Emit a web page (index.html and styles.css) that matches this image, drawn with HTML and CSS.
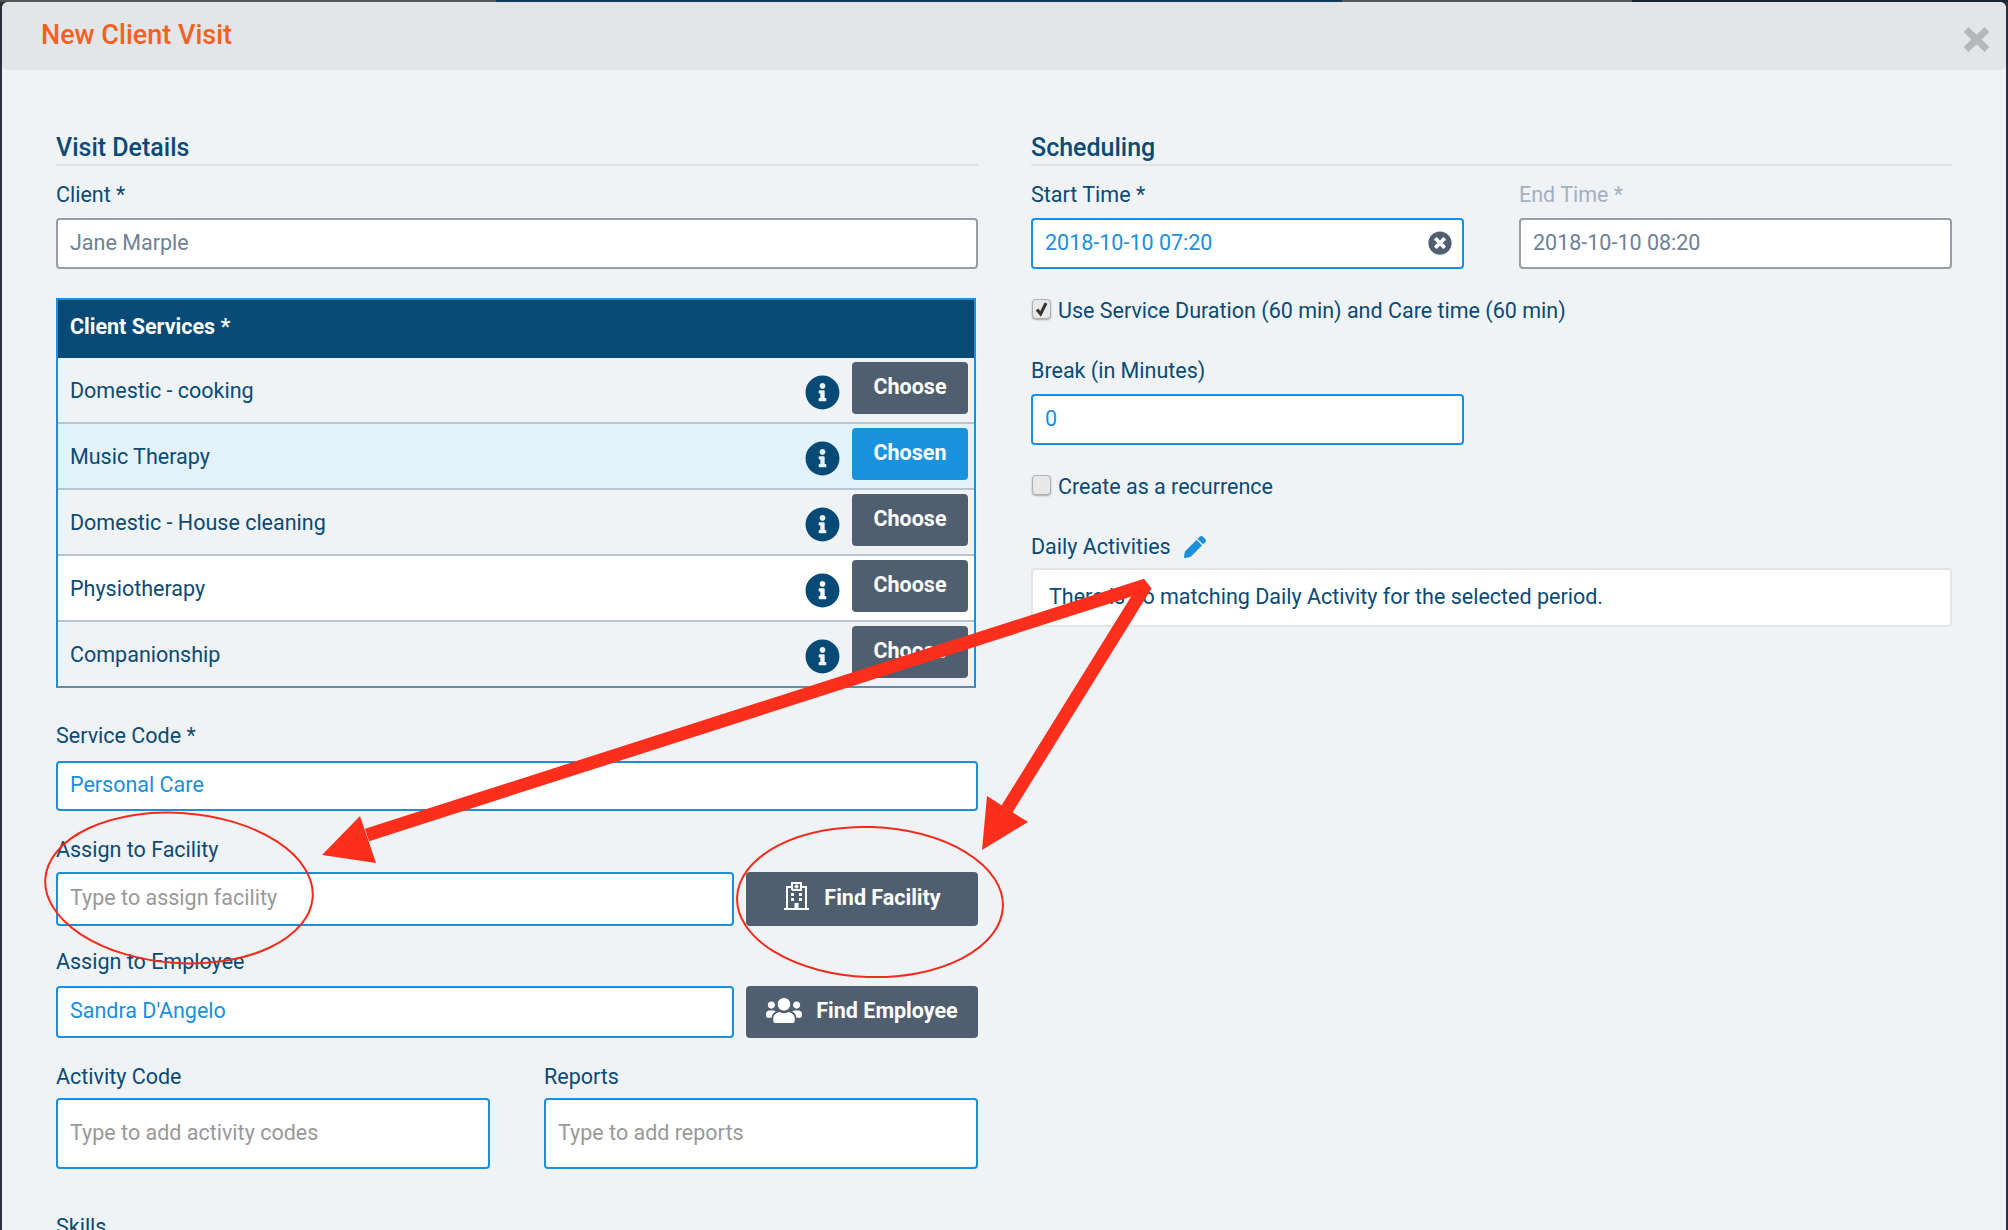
FILE: index.html
```html
<!DOCTYPE html>
<html lang="en">
<head>
<meta charset="utf-8">
<title>New Client Visit</title>
<link rel="stylesheet" href="styles.css">
</head>
<body>
<div class="backdrop-strip">
  <span class="strip-a"></span><span class="strip-b"></span><span class="strip-a"></span><span class="strip-c"></span>
</div>
<main class="modal">
  <header class="modal-header">
    <h1 class="modal-title">New Client Visit</h1>
    <svg class="close-icon" viewBox="0 0 27 27" aria-hidden="true"><path d="M3 3.5 24 23.5M24 3.5 3 23.5"/></svg>
  </header>
  <div class="modal-body">
    <section class="col">
      <h2 class="section-title">Visit Details</h2>
      <div class="label first">Client *</div>
      <div class="input h51 muted">Jane Marple</div>

      <div class="services">
        <div class="services-head">Client Services *</div>
        <div class="service-row">
          <span class="service-name">Domestic - cooking</span>
          <svg class="info" viewBox="0 0 512 512" aria-hidden="true"><use href="#i-info"/></svg>
          <span class="btn-choose">Choose</span>
        </div>
        <div class="service-row chosen">
          <span class="service-name">Music Therapy</span>
          <svg class="info" viewBox="0 0 512 512" aria-hidden="true"><use href="#i-info"/></svg>
          <span class="btn-choose on">Chosen</span>
        </div>
        <div class="service-row">
          <span class="service-name">Domestic - House cleaning</span>
          <svg class="info" viewBox="0 0 512 512" aria-hidden="true"><use href="#i-info"/></svg>
          <span class="btn-choose">Choose</span>
        </div>
        <div class="service-row white">
          <span class="service-name">Physiotherapy</span>
          <svg class="info" viewBox="0 0 512 512" aria-hidden="true"><use href="#i-info"/></svg>
          <span class="btn-choose">Choose</span>
        </div>
        <div class="service-row last">
          <span class="service-name">Companionship</span>
          <svg class="info" viewBox="0 0 512 512" aria-hidden="true"><use href="#i-info"/></svg>
          <span class="btn-choose">Choose</span>
        </div>
      </div>

      <div class="label service-label">Service Code *</div>
      <div class="input active h50">Personal Care</div>

      <div class="label facility-label">Assign to Facility</div>
      <div class="assign-row">
        <div class="input focus h54 grow placeholder">Type to assign facility</div>
        <span class="btn-find">
          <svg class="hospital" viewBox="0 0 27 28" aria-hidden="true">
            <path class="hosp-line" d="M1 27H26M4 27V5H9M18 5H23V27M9 8V1H18V8H9"/>
            <path class="hosp-line" d="M13.5 2.5V6.5M11.5 4.500H15.500"/>
            <path class="hosp-dots" d="M8 11h3v3H8zM16 11h3v3h-3zM8 16h3v3H8zM16 16h3v3h-3zM11.500 21h4v6h-4z"/>
          </svg>
          <span>Find Facility</span>
        </span>
      </div>

      <div class="label employee-label">Assign to Employee</div>
      <div class="assign-row">
        <div class="input active h52 grow">Sandra D'Angelo</div>
        <span class="btn-find">
          <svg class="users" viewBox="0 0 640 512" aria-hidden="true"><path d="M96 224c35.300 0 64-28.700 64-64s-28.700-64-64-64-64 28.700-64 64 28.700 64 64 64zm448 0c35.300 0 64-28.700 64-64s-28.700-64-64-64-64 28.700-64 64 28.700 64 64 64zm32 32h-64c-17.600 0-33.500 7.100-45.100 18.600 40.300 22.100 68.900 62 75.100 109.400h66c17.700 0 32-14.300 32-32v-32c0-35.300-28.700-64-64-64zm-256 0c61.900 0 112-50.100 112-112S381.900 32 320 32 208 82.100 208 144s50.100 112 112 112zm76.800 32h-8.300c-20.800 10-43.900 16-68.500 16s-47.600-6-68.500-16h-8.300C179.600 288 128 339.600 128 403.200V432c0 26.500 21.500 48 48 48h288c26.500 0 48-21.500 48-48v-28.800c0-63.600-51.600-115.200-115.200-115.200zm-223.700-13.400C161.500 263.100 145.600 256 128 256H64c-35.300 0-64 28.700-64 64v32c0 17.700 14.300 32 32 32h65.900c6.300-47.400 34.900-87.300 75.200-109.400z"/></svg>
          <span>Find Employee</span>
        </span>
      </div>

      <div class="code-row">
        <div>
          <div class="label tight">Activity Code</div>
          <div class="input active h71 placeholder">Type to add activity codes</div>
        </div>
        <div>
          <div class="label tight">Reports</div>
          <div class="input active h71 placeholder">Type to add reports</div>
        </div>
      </div>

      <div class="label skills-label">Skills</div>
    </section>

    <section class="col">
      <h2 class="section-title">Scheduling</h2>
      <div class="time-row">
        <div>
          <div class="label first">Start Time *</div>
          <div class="input active h51 with-clear">
            <span>2018-10-10 07:20</span>
            <svg class="clear" viewBox="0 0 512 512" aria-hidden="true"><path d="M256 8C119 8 8 119 8 256s111 248 248 248 248-111 248-248S393 8 256 8zm121.600 313.100c4.700 4.700 4.700 12.300 0 17L338 377.600c-4.700 4.700-12.300 4.700-17 0L256 312l-65.100 65.600c-4.700 4.700-12.300 4.700-17 0L134.400 338c-4.700-4.700-4.700-12.300 0-17l65.600-65-65.600-65.100c-4.700-4.700-4.700-12.300 0-17l39.600-39.600c4.700-4.700 12.300-4.700 17 0l65 65.700 65.100-65.600c4.700-4.700 12.300-4.700 17 0l39.600 39.600c4.700 4.700 4.700 12.300 0 17L312 256l65.600 65.100z"/></svg>
          </div>
        </div>
        <div>
          <div class="label first disabled">End Time *</div>
          <div class="input h51 muted">2018-10-10 08:20</div>
        </div>
      </div>

      <div class="check-row duration">
        <span class="check"><svg viewBox="0 0 18 20" aria-hidden="true"><path d="M4 10.500 8 15.500 14 3.500"/></svg></span>
        <span>Use Service Duration (60 min) and Care time (60 min)</span>
      </div>

      <div class="label break-label">Break (in Minutes)</div>
      <div class="input active h51 half">0</div>

      <div class="check-row recurrence">
        <span class="check"></span>
        <span>Create as a recurrence</span>
      </div>

      <div class="label daily-label">
        <span>Daily Activities</span>
        <svg class="pencil" viewBox="0 0 512 512" aria-hidden="true"><path d="M497.900 142.100l-46.100 46.100c-4.700 4.700-12.300 4.700-17 0l-111-111c-4.700-4.700-4.700-12.300 0-17l46.100-46.100c18.700-18.700 49.100-18.700 67.900 0l60.100 60.100c18.800 18.700 18.800 49.100 0 67.900zM284.200 99.800L21.600 362.400.4 483.900c-2.900 16.400 11.400 30.600 27.800 27.800l121.500-21.300 262.600-262.600c4.700-4.700 4.700-12.300 0-17l-111-111c-4.800-4.700-12.400-4.700-17.100 0z"/></svg>
      </div>
      <div class="notice">There is no matching Daily Activity for the selected period.</div>
    </section>
  </div>
</main>

<svg class="sprite" aria-hidden="true"><symbol id="i-info" viewBox="0 0 512 512"><path d="M256 8C119.043 8 8 119.083 8 256c0 136.997 111.043 248 248 248s248-111.003 248-248C504 119.083 392.957 8 256 8zm0 110c23.196 0 42 18.804 42 42s-18.804 42-42 42-42-18.804-42-42 18.804-42 42-42zm56 254c0 6.627-5.373 12-12 12h-88c-6.627 0-12-5.373-12-12v-24c0-6.627 5.373-12 12-12h12v-64h-12c-6.627 0-12-5.373-12-12v-24c0-6.627 5.373-12 12-12h64c6.627 0 12 5.373 12 12v100h12c6.627 0 12 5.373 12 12v24z"/></symbol></svg>

<svg class="annotations" viewBox="0 0 2008 1230" aria-hidden="true">
  <ellipse class="ring" cx="179" cy="888" rx="134" ry="75" transform="rotate(4 179 888)"/>
  <ellipse class="ring" cx="870" cy="902" rx="133" ry="75" transform="rotate(2 870 902)"/>
  <polyline class="shaft" points="367,835 1146,585 1007,809"/>
  <polygon class="head" points="322,855 360,816 376,863"/>
  <polygon class="head" points="982,850 987,796 1028,822"/>
</svg>
</body>
</html>
```
FILE: styles.css
```css
* { box-sizing: border-box; }
html, body { margin: 0; height: 1230px; overflow: hidden; }
body {
  position: relative;
  background: #2b3138;
  font-family: Roboto, "Liberation Sans", sans-serif;
  font-size: 21.5px;
  color: #0a4a75;
  display: flex;
  flex-direction: column;
}
.backdrop-strip { display: flex; height: 2px; flex: none; }
.strip-a { width: 496px; background: #555; }
.strip-b { width: 846px; background: #0f3a5a; }
.strip-a:nth-child(3) { width: 290px; }
.strip-c { flex: 1; background: #1a2330; }

.modal {
  margin: 0 2px;
  flex: 1;
  background: #eff3f6;
  border-radius: 6px 6px 0 0;
  overflow: hidden;
}
.modal-header {
  height: 68px;
  background: #e3e6e9;
  display: flex;
  align-items: center;
  justify-content: space-between;
  padding: 0 16px 3px 39px;
  border-radius: 6px;
}
.modal-title { margin: 0; font-size: 27px; font-weight: 500; color: #f4611f; }
.close-icon { width: 27px; height: 27px; margin-top: 9px; }
.close-icon path { fill: none; stroke: #b4b8ba; stroke-width: 7; }

.modal-body {
  display: grid;
  grid-template-columns: 922px 921px;
  column-gap: 53px;
  padding: 60px 0 0 54px;
}
.section-title {
  margin: 0;
  height: 36px;
  font-size: 25px;
  line-height: 36px;
  font-weight: 500;
  color: #0a4a75;
  border-bottom: 2px solid #dfe1e3;
}
.label { line-height: 28px; margin-bottom: 10px; }
.label.first { margin-top: 15px; margin-bottom: 9px; }
.label.disabled { color: #a3b0bf; }
.label.tight { margin-bottom: 7px; }
.service-label { margin-top: 34px; margin-bottom: 11px; }
.facility-label { margin-top: 25px; margin-bottom: 8px; }
.employee-label { margin-top: 22px; }
.skills-label { margin-top: 44px; }
.break-label { margin-top: 32px; margin-bottom: 9px; }
.daily-label {
  margin-top: 32px;
  margin-bottom: 7px;
  display: flex;
  align-items: center;
  gap: 13px;
}

.input {
  display: flex;
  align-items: center;
  background: #fff;
  border: 2px solid #999ca3;
  border-radius: 4px;
  padding: 0 12px 2px;
  color: #0a4a75;
}
.input.muted { color: #6f8196; }
.input.active { border-color: #1a8fdc; color: #1a8fdc; }
.input.focus { border-color: #1a8fdc; }
.input.placeholder { color: #999; }
.h50 { height: 50px; padding-bottom: 4px; }
.h51 { height: 51px; }
.h52 { height: 52px; padding-bottom: 4px; }
.h54 { height: 54px; padding-bottom: 4px; }
.h71 { height: 71px; }
.half { width: 433px; }
.grow { flex: 1; }
.with-clear { justify-content: space-between; padding-right: 10px; }
.clear { width: 24px; height: 24px; fill: #505f6f; }

.services {
  margin-top: 29px;
  width: 920px;
  border: 2px solid #1a8fdc;
  border-bottom-color: #6a88a3;
}
.services-head {
  height: 58px;
  background: #074a76;
  color: #fff;
  font-weight: 700;
  display: flex;
  align-items: center;
  padding: 0 0 5px 12px;
}
.service-row {
  height: 66px;
  display: flex;
  align-items: center;
  padding: 0 6px 0 12px;
  border-bottom: 2px solid #b6c5d1;
}
.service-row.last { border-bottom: 0; height: 64px; }
.service-row.chosen { background: #e3f1fb; }
.service-row.white { background: #fff; }
.service-name { flex: 1; }
.info { width: 35px; height: 35px; fill: #074a76; margin: 5px 12px 0 0; }
.btn-choose {
  width: 116px;
  height: 52px;
  margin-bottom: 4px;
  padding-bottom: 3px;
  display: flex;
  align-items: center;
  justify-content: center;
  background: #505f6f;
  color: #fff;
  font-weight: 700;
  border-radius: 4px;
}
.btn-choose.on { background: #1a93de; }

.assign-row { display: flex; gap: 12px; }
.btn-find {
  width: 232px;
  padding-bottom: 3px;
  display: flex;
  align-items: center;
  justify-content: center;
  gap: 14px;
  background: #505f6f;
  color: #fff;
  font-weight: 700;
  border-radius: 4px;
}
.hospital { width: 27px; height: 28px; margin-bottom: 4px; }
.hosp-line { fill: none; stroke: #fff; stroke-width: 2; }
.hosp-dots { fill: #fff; }
.users { width: 36px; height: 29px; fill: #fff; }

.code-row {
  margin-top: 25px;
  display: grid;
  grid-template-columns: 434px 434px;
  column-gap: 54px;
}
.time-row {
  display: grid;
  grid-template-columns: 433px 433px;
  column-gap: 55px;
}
.check-row { display: flex; align-items: center; gap: 7px; line-height: 28px; }
.duration { margin-top: 28px; }
.recurrence { margin-top: 28px; }
.check {
  width: 19px;
  height: 20px;
  margin: -4px 0 0 1px;
  background: #e8e8e8;
  border: 1px solid #b0b0b0;
  border-radius: 4px;
  box-shadow: 0 1px 2px rgba(0, 0, 0, .3);
  display: block;
}
.check svg { display: block; width: 100%; height: 100%; }
.check path { fill: none; stroke: #333; stroke-width: 3.5; }
.pencil { width: 22px; height: 22px; fill: #1a8fdc; }
.notice {
  height: 59px;
  background: #fff;
  border: 2px solid #e3e4e6;
  border-radius: 4px;
  display: flex;
  align-items: center;
  padding-left: 16px;
  padding-bottom: 2px;
}

.sprite { position: absolute; width: 0; height: 0; }
.annotations { position: absolute; left: 0; top: 0; width: 2008px; height: 1230px; pointer-events: none; }
.ring { fill: none; stroke: #f22c1c; stroke-width: 2; }
.shaft { fill: none; stroke: #fc2e1c; stroke-width: 13; stroke-linejoin: bevel; }
.head { fill: #fc2e1c; }
```
